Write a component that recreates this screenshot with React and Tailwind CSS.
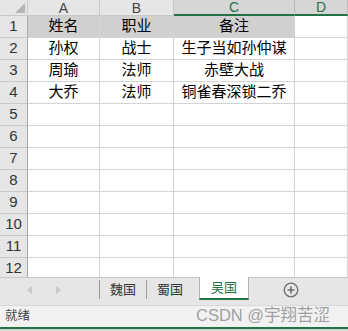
import React from "react";

const cols = [
  { key: "A", w: "w-[72px]" },
  { key: "B", w: "w-[74px]" },
  { key: "C", w: "w-[121px]" },
  { key: "D", w: "flex-1" },
];

const data = [
  ["姓名", "职业", "备注"],
  ["孙权", "战士", "生子当如孙仲谋"],
  ["周瑜", "法师", "赤壁大战"],
  ["大乔", "法师", "铜雀春深锁二乔"],
];

const rows = Array.from({ length: 12 }, (_, i) => i + 1);

const HeaderRow = () => (
  <div className="flex h-[16px]">
    <div className="relative w-[28px] shrink-0 bg-[#e6e6e6] border-r border-b border-[#c8c8c8]">
      <div className="absolute right-[2px] bottom-[2px] w-0 h-0 border-l-[10px] border-l-transparent border-b-[10px] border-b-[#b4b4b4]" />
    </div>
    {cols.map((c) => {
      const sel = c.key === "C" || c.key === "D";
      return (
        <div
          key={c.key}
          className={
            sel
              ? `${c.w} shrink-0 flex items-center justify-center bg-[#d6d6d6] border-r border-[#b8b8b8] border-b-2 border-b-[#217346] text-[#217346] text-[14px] leading-none`
              : `${c.w} shrink-0 flex items-center justify-center bg-[#e6e6e6] border-r border-b border-[#c8c8c8] text-[#444] text-[14px] leading-none`
          }
        >
          {c.key}
        </div>
      );
    })}
  </div>
);

const Row = ({ n }) => {
  const cells = data[n - 1] || ["", "", ""];
  return (
    <div className="flex h-[22px] shrink-0">
      <div className="w-[28px] shrink-0 flex items-center justify-center bg-[#e6e6e6] border-r border-r-[#a8a8a8] border-b border-b-[#c8c8c8] text-[#333] text-[15px]">
        {n}
      </div>
      {cols.map((c, i) => (
        <div
          key={c.key}
          className={`${c.w} shrink-0 flex items-center justify-center border-r border-b border-[#d4d4d4] text-[15px] text-black whitespace-nowrap ${
            n === 1 && i < 3 ? "bg-[#d0d0d0]" : "bg-white"
          }`}
        >
          {cells[i] || ""}
        </div>
      ))}
    </div>
  );
};

const Tab = ({ label }) => (
  <div className="flex items-center px-[10px] h-full">
    <span className="text-[13px] text-[#333]">{label}</span>
  </div>
);

export default function App() {
  return (
    <div
      className="relative w-[348px] h-[331px] overflow-hidden bg-white flex flex-col"
      style={{ fontFamily: '"Liberation Sans", "Noto Sans CJK SC", sans-serif' }}
    >
      <div className="h-[277px] shrink-0 overflow-hidden flex flex-col">
        <HeaderRow />
        {rows.map((n) => (
          <Row key={n} n={n} />
        ))}
      </div>

      <div className="h-[28px] shrink-0 flex bg-[#e6e6e6]">
        <div className="w-[199px] shrink-0 border-t border-[#c6c6c6] flex items-start">
          <div className="flex items-center h-[23px] w-[99px]">
            <div className="ml-[27px] w-0 h-0 border-y-[4px] border-y-transparent border-r-[5px] border-r-[#c8c8c8]" />
            <div className="ml-[24px] w-0 h-0 border-y-[4px] border-y-transparent border-l-[5px] border-l-[#c8c8c8]" />
          </div>
          <div className="flex items-center h-[23px]">
            <div className="w-px h-[19px] bg-[#9c9c9c]" />
            <Tab label="魏国" />
            <div className="w-px h-[19px] bg-[#9c9c9c]" />
            <Tab label="蜀国" />
          </div>
        </div>
        <div className="w-[50px] shrink-0 h-[23px] bg-white border-x border-[#b4b4b4] border-b-2 border-b-[#217346] flex items-center justify-center">
          <span className="text-[13px] text-[#217346]">吴国</span>
        </div>
        <div className="flex-1 border-t border-[#c6c6c6] flex items-start">
          <div className="h-[23px] w-[84px] flex items-center justify-center">
            <svg width="16" height="16" viewBox="0 0 16 16">
              <circle cx="8" cy="8" r="6.8" fill="none" stroke="#6e6e6e" strokeWidth="1.3" />
              <path d="M8 4.5v7M4.5 8h7" stroke="#6e6e6e" strokeWidth="1.7" />
            </svg>
          </div>
        </div>
      </div>

      <div className="h-[22px] shrink-0 bg-[#f1f1f1] border-t border-[#d8d8d8] flex items-center px-[5px]">
        <span className="text-[12.5px] text-[#444]">就绪</span>
      </div>
      <div className="h-[2px] shrink-0 bg-[#217346]" />
      <div className="flex-1 bg-[#d6d6d6]" />

      <div className="absolute left-[196px] top-[305px] text-[16.5px] leading-[20px] text-[#8a8a8a]/80 whitespace-nowrap">
        CSDN @宇翔苦涩
      </div>
    </div>
  );
}
